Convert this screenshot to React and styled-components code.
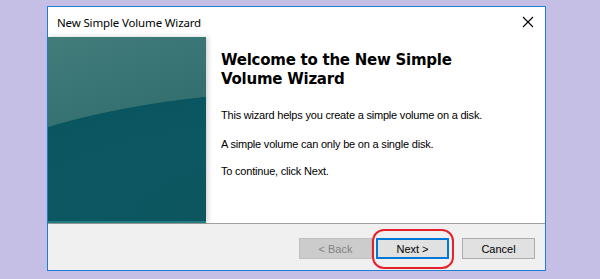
import React from 'react'
import styled, { createGlobalStyle } from 'styled-components'

const Global = createGlobalStyle`
  html, body {
    margin: 0;
    padding: 0;
    background: #c6bfe5;
  }
  body {
    width: 600px;
    height: 279px;
    overflow: hidden;
    padding-top: 6px;
    box-sizing: border-box;
  }
`

const Window = styled.div`
  margin-left: 47px;
  width: 499px;
  height: 265px;
  box-sizing: border-box;
  border: 1px solid #1b7fd6;
  background: #fff;
  display: flex;
  flex-direction: column;
`

const TitleBar = styled.div`
  height: 30px;
  display: flex;
  align-items: center;
  justify-content: space-between;
  padding: 0 9px 0 9px;
  font-family: "Noto Sans", "Open Sans", sans-serif;
  font-size: 11.5px;
  letter-spacing: -0.15px;
  color: #000;
`

const Close = styled.div`
  width: 12px;
  height: 12px;
  display: flex;
  margin-right: 2px;
`

const Main = styled.div`
  height: 186px;
  display: flex;
  border-bottom: 1px solid #a0a0a0;
`

const Banner = styled.div`
  width: 158px;
  flex: none;
  box-shadow: 2px 0 5px rgba(0, 0, 0, 0.18);
  background:
    linear-gradient(to top, #1f7d83 0, #1f7d83 2px, transparent 2px),
    radial-gradient(ellipse 420px 125px at 300px 177px, #0b545c 0, #0d5762 60%, #0a5660 99.4%, transparent 100%),
    linear-gradient(160deg, #427d7c 0%, #33706f 45%, #28666b 100%);
`

const Content = styled.div`
  flex: 1;
  padding: 14px 12px 0 15px;
  color: #000;
`

const Heading = styled.h1`
  margin: 0 0 20px;
  max-width: 250px;
  font-family: "DejaVu Sans", Verdana, sans-serif;
  font-weight: bold;
  font-size: 15px;
  line-height: 19px;
  letter-spacing: -0.25px;
`

const Para = styled.p`
  margin: 0 0 ${p => p.gap}px;
  font-family: "Liberation Sans", Arial, sans-serif;
  font-size: 11px;
  line-height: 13px;
  letter-spacing: -0.2px;
`

const Footer = styled.div`
  flex: 1;
  background: #f0f0f0;
  display: flex;
  justify-content: flex-end;
  align-items: flex-start;
  padding: 14px 10px 0 0;
  gap: 4px;
`

const Button = styled.button`
  width: 73px;
  height: 21px;
  box-sizing: border-box;
  padding: 0;
  font-family: "Liberation Sans", Arial, sans-serif;
  font-size: 11px;
  color: ${p => (p.disabled ? '#838383' : '#000')};
  background: ${p => (p.disabled ? '#cccccc' : '#e1e1e1')};
  border: ${p => (p.primary ? '2px solid #0078d7' : p.disabled ? '1px solid #bfbfbf' : '1px solid #adadad')};
  margin-left: ${p => p.space || 0}px;
`

const Highlight = styled.div`
  position: relative;
  display: flex;
`

const Ring = styled.div`
  position: absolute;
  left: -4px;
  right: -5px;
  top: -9px;
  bottom: -10px;
  border: 2px solid #e5222b;
  border-radius: 12px;
  pointer-events: none;
`

export default function App() {
  return (
    <>
      <Global />
      <Window>
        <TitleBar>
          <span>New Simple Volume Wizard</span>
          <Close>
            <svg width="12" height="12" viewBox="0 0 12 12">
              <path d="M1 1 L11 11 M11 1 L1 11" stroke="#000" strokeWidth="1.1" fill="none" />
            </svg>
          </Close>
        </TitleBar>
        <Main>
          <Banner />
          <Content>
            <Heading>Welcome to the New Simple Volume Wizard</Heading>
            <Para gap={16}>This wizard helps you create a simple volume on a disk.</Para>
            <Para gap={14}>A simple volume can only be on a single disk.</Para>
            <Para gap={0}>To continue, click Next.</Para>
          </Content>
        </Main>
        <Footer>
          <Button disabled>&lt; Back</Button>
          <Highlight>
            <Button primary>Next &gt;</Button>
            <Ring />
          </Highlight>
          <Button space={9}>Cancel</Button>
        </Footer>
      </Window>
    </>
  )
}
